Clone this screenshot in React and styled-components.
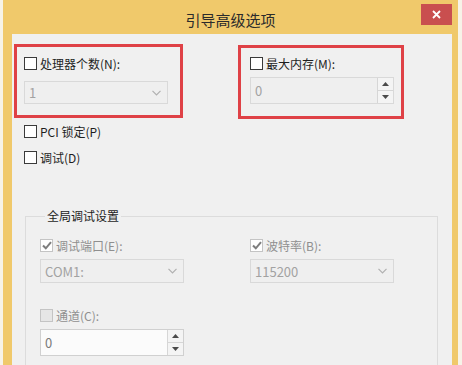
import React from 'react'
import styled, { createGlobalStyle } from 'styled-components'

const GlobalStyle = createGlobalStyle`
  html, body {
    margin: 0;
    padding: 0;
    background: #f7f3e8;
    overflow: hidden;
  }
  body {
    font-family: "Noto Sans CJK SC", "Noto Sans", sans-serif;
    font-size: 12px;
    color: #1e1e1e;
  }
`

const Window = styled.div`
  margin-left: 3px;
  width: 455px;
  height: 365px;
  background: #f0c96b;
  display: flex;
  flex-direction: column;
  box-sizing: border-box;
  padding: 0 6px 0 9px;
  overflow: hidden;
`

const TitleBar = styled.div`
  height: 34px;
  flex: none;
  display: grid;
  grid-template-columns: 1fr auto 1fr;
  margin: 0 -6px 0 -9px;
`

const Title = styled.div`
  grid-column: 2;
  font-size: 15px;
  line-height: 34px;
  color: #2b2b2b;
  padding-top: 3px;
  box-sizing: border-box;
`

const CloseButton = styled.div`
  grid-column: 3;
  justify-self: end;
  align-self: start;
  width: 31px;
  height: 21px;
  margin: 4px 6px 0 0;
  background: #c94f4f;
  display: flex;
  align-items: center;
  justify-content: center;
`

const Content = styled.div`
  flex: 1;
  min-height: 0;
  overflow: hidden;
  background: #f0f0f0;
  padding-top: 10px;
`

const TopRow = styled.div`
  display: flex;
  align-items: flex-start;
  margin-left: 2px;
  gap: 55px;
`

const RedBox = styled.div`
  box-sizing: border-box;
  width: ${p => p.w}px;
  height: 74px;
  margin-top: ${p => p.offset || 0}px;
  border: 3px solid #df4146;
  padding: ${p => p.pt}px 0 0 ${p => p.pl}px;
  display: flex;
  flex-direction: column;
  gap: ${p => p.gap}px;
`

const Row = styled.label`
  display: flex;
  align-items: center;
  gap: 3px;
  height: 16px;
  margin-left: ${p => p.ml || 0}px;
  margin-top: ${p => p.mt || 0}px;
  color: ${p => (p.disabled ? '#8f8f8f' : '#1e1e1e')};
  white-space: nowrap;
`

const Box = styled.span`
  box-sizing: border-box;
  width: 13px;
  height: 13px;
  flex: none;
  border: 1px solid ${p => (p.disabled ? '#c4c4c4' : '#3a3a3a')};
  background: ${p => (p.disabled && !p.checked ? '#e6e6e6' : '#ffffff')};
  display: flex;
  align-items: center;
  justify-content: center;
`

const Combo = styled.div`
  box-sizing: border-box;
  width: 144px;
  height: ${p => p.h || 23}px;
  border: 1px solid #d9d9d9;
  background: #efefef;
  color: #a2a2a2;
  font-size: 13px;
  display: flex;
  align-items: center;
  justify-content: space-between;
  padding: 0 6px 0 4px;
`

const Spinner = styled.div`
  box-sizing: border-box;
  width: 144px;
  height: 27px;
  border: 1px solid ${p => (p.light ? '#d0d0d0' : '#d9d9d9')};
  background: ${p => (p.light ? '#fbfbfb' : '#efefef')};
  color: ${p => (p.light ? '#7a7a7a' : '#a2a2a2')};
  font-size: 13px;
  display: flex;
  align-items: stretch;
`

const SpinValue = styled.div`
  flex: 1;
  display: flex;
  align-items: center;
  padding-left: 4px;
`

const SpinButtons = styled.div`
  width: 15px;
  display: flex;
  flex-direction: column;
  border-left: 1px solid #d6d6d6;
`

const SpinHalf = styled.div`
  flex: 1;
  display: flex;
  align-items: center;
  justify-content: center;
  background: #f4f4f4;
  & + & {
    border-top: 1px solid #d6d6d6;
  }
`

const Group = styled.fieldset`
  margin: 43px 0 0 13px;
  width: 413px;
  box-sizing: border-box;
  border: 1px solid #dcdcdc;
  padding: 13px 0 40px 14px;
  min-width: 0;
`

const Legend = styled.legend`
  padding: 0 2px;
  margin-left: 5px;
  line-height: 16px;
  color: #1e1e1e;
`

const GroupGrid = styled.div`
  display: grid;
  grid-template-columns: 144px 144px;
  column-gap: 66px;
  row-gap: 24px;
`

const Field = styled.div`
  display: flex;
  flex-direction: column;
  gap: 6px;
`

const Chevron = () => (
  <svg width="9" height="6" viewBox="0 0 9 6">
    <polyline points="0.5,0.8 4.5,4.8 8.5,0.8" fill="none" stroke="#b0b0b0" strokeWidth="1.2" />
  </svg>
)

const Arrow = ({ up }) => (
  <svg width="7" height="4" viewBox="0 0 7 4">
    <polygon points={up ? '0,4 3.5,0 7,4' : '0,0 3.5,4 7,0'} fill="#4a4a4a" />
  </svg>
)

const Check = ({ checked, disabled, children, ...rest }) => (
  <Row disabled={disabled} {...rest}>
    <Box checked={checked} disabled={disabled}>
      {checked && (
        <svg width="10" height="9" viewBox="0 0 10 9">
          <polyline points="1,4.5 3.8,7.3 9,1.2" fill="none" stroke="#7d7d7d" strokeWidth="2" />
        </svg>
      )}
    </Box>
    {children}
  </Row>
)

const NumberBox = ({ value, light }) => (
  <Spinner light={light}>
    <SpinValue>{value}</SpinValue>
    <SpinButtons>
      <SpinHalf><Arrow up /></SpinHalf>
      <SpinHalf><Arrow /></SpinHalf>
    </SpinButtons>
  </Spinner>
)

const DropDown = ({ value, h }) => (
  <Combo h={h}>
    <span>{value}</span>
    <Chevron />
  </Combo>
)

export default function App() {
  return (
    <>
      <GlobalStyle />
      <Window>
        <TitleBar>
          <Title>引导高级选项</Title>
          <CloseButton>
            <svg width="9" height="9" viewBox="0 0 9 9">
              <path d="M1 1 L8 8 M8 1 L1 8" stroke="#ffffff" strokeWidth="1.8" />
            </svg>
          </CloseButton>
        </TitleBar>
        <Content>
          <TopRow>
            <RedBox w={169} pt={8} pl={7} gap={10}>
              <Check>处理器个数(N):</Check>
              <DropDown value="1" />
            </RedBox>
            <RedBox w={166} pt={7} pl={9} gap={6} offset={1}>
              <Check>最大内存(M):</Check>
              <NumberBox value="0" />
            </RedBox>
          </TopRow>
          <Check ml={12} mt={4}>PCI 锁定(P)</Check>
          <Check ml={12} mt={10}>调试(D)</Check>
          <Group>
            <Legend>全局调试设置</Legend>
            <GroupGrid>
              <Field>
                <Check checked disabled>调试端口(E):</Check>
                <DropDown value="COM1:" h={24} />
              </Field>
              <Field>
                <Check checked disabled>波特率(B):</Check>
                <DropDown value="115200" h={24} />
              </Field>
              <Field>
                <Check disabled>通道(C):</Check>
                <NumberBox value="0" light />
              </Field>
            </GroupGrid>
          </Group>
        </Content>
      </Window>
    </>
  )
}
